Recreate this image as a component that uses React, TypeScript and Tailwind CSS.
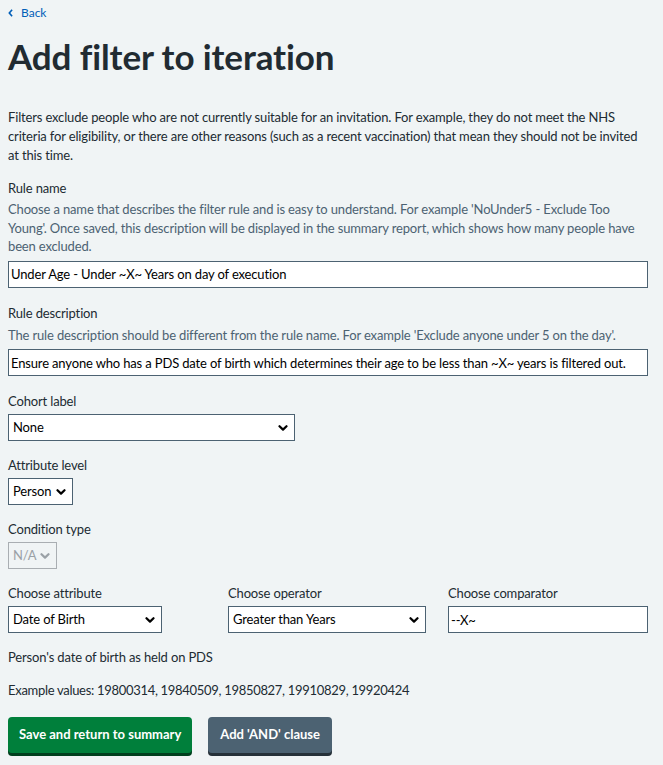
import React from "react";

const Chevron = ({ className }: { className?: string }) => (
  <svg
    viewBox="0 0 10 6"
    className={className}
    fill="none"
    stroke="currentColor"
    strokeWidth="2.2"
    strokeLinecap="round"
    strokeLinejoin="round"
  >
    <path d="M1.5 1.2 5 4.6 8.5 1.2" />
  </svg>
);

const SelectBox = ({
  value,
  widthClass,
  disabled,
}: {
  value: string;
  widthClass: string;
  disabled?: boolean;
}) => (
  <div className={`relative ${widthClass}`}>
    <select
      disabled={disabled}
      defaultValue={value}
      className={`w-full h-[27px] appearance-none pl-[4px] pr-[16px] text-[13px] tracking-[-0.15px] leading-[25px] border outline-none ${
        disabled
          ? "border-[#a9aeb2] text-[#9aa1a6] bg-transparent"
          : "border-[#4c6272] text-black bg-white"
      }`}
    >
      <option>{value}</option>
    </select>
    <Chevron
      className={`pointer-events-none absolute right-[7px] top-[11px] w-[10px] h-[6px] ${
        disabled ? "text-[#9aa1a6]" : "text-black"
      }`}
    />
  </div>
);

const Label = ({ children }: { children: React.ReactNode }) => (
  <label className="block text-[13px] tracking-[-0.15px] leading-[19px] text-[#212b32] mb-[3px]">
    {children}
  </label>
);

const Hint = ({ children, top }: { children: React.ReactNode; top: string }) => (
  <div className={`text-[13px] tracking-[-0.15px] leading-[18.5px] text-[#4c6272] mb-[5px] ${top}`}>
    {children}
  </div>
);

const TextInput = ({ value }: { value: string }) => (
  <input
    type="text"
    defaultValue={value}
    className="block w-full h-[27px] px-[2px] text-[13px] tracking-[-0.15px] text-black bg-white border border-[#4c6272] outline-none"
  />
);

export default function App() {
  return (
    <div className="min-h-[765px] bg-[#f0f4f5] font-['Lato',sans-serif] text-[#212b32]">
      <div className="w-[640px] ml-2 pt-[5px] pb-4">
        <a
          href="#"
          className="flex items-center gap-[5px] text-[12px] leading-[16px] text-[#005eb8]"
        >
          <svg viewBox="0 0 6 10" className="w-[5px] h-[8px]" fill="none" stroke="currentColor" strokeWidth="2">
            <path d="M5 1 1.5 5 5 9" />
          </svg>
          <span className="ml-[3px]">Back</span>
        </a>

        <h1 className="mt-[15px] text-[35px] leading-[40px] font-bold tracking-[-0.1px]">
          Add filter to iteration
        </h1>

        <p className="mt-[32px] text-[13px] tracking-[-0.15px] leading-[19px]">
          Filters exclude people who are not currently suitable for an invitation. For example, they do
          not meet the NHS criteria for eligibility, or there are other reasons (such as a recent
          vaccination) that mean they should not be invited at this time.
        </p>

        <div className="mt-[14px]">
          <label className="block text-[13px] tracking-[-0.15px] leading-[19px]">Rule name</label>
          <Hint top="mt-[2px]">
            Choose a name that describes the filter rule and is easy to understand. For example
            'NoUnder5 - Exclude Too Young'. Once saved, this description will be displayed in the
            summary report, which shows how many people have been excluded.
          </Hint>
          <TextInput value="Under Age - Under ~X~ Years on day of execution" />
        </div>

        <div className="mt-[16px]">
          <label className="block text-[13px] tracking-[-0.15px] leading-[19px]">Rule description</label>
          <Hint top="mt-[3px]">
            The rule description should be different from the rule name. For example 'Exclude anyone
            under 5 on the day'.
          </Hint>
          <TextInput value="Ensure anyone who has a PDS date of birth which determines their age to be less than ~X~ years is filtered out." />
        </div>

        <div className="mt-[16px]">
          <Label>Cohort label</Label>
          <SelectBox value="None" widthClass="w-[287px]" />
        </div>

        <div className="mt-[15px]">
          <Label>Attribute level</Label>
          <SelectBox value="Person" widthClass="w-[65px]" />
        </div>

        <div className="mt-[15px]">
          <Label>Condition type</Label>
          <SelectBox value="N/A" widthClass="w-[49px]" disabled />
        </div>

        <div className="mt-[15px] grid grid-cols-3 gap-5">
          <div>
            <Label>Choose attribute</Label>
            <SelectBox value="Date of Birth" widthClass="w-[154px]" />
          </div>
          <div>
            <Label>Choose operator</Label>
            <SelectBox value="Greater than Years" widthClass="w-[198px]" />
          </div>
          <div>
            <Label>Choose comparator</Label>
            <TextInput value="--X~" />
          </div>
        </div>

        <p className="mt-[15px] text-[13px] tracking-[-0.15px] leading-[19px]">
          Person's date of birth as held on PDS
        </p>
        <p className="mt-[14px] text-[13px] tracking-[-0.3px] leading-[19px]">
          Example values: 19800314, 19840509, 19850827, 19910829, 19920424
        </p>

        <div className="mt-[17px] flex gap-4">
          <button className="h-[36px] px-[11px] rounded-[4px] bg-[#007f3b] text-white text-[13px] font-bold shadow-[0_3px_0_#00401e]">
            Save and return to summary
          </button>
          <button className="h-[36px] px-[12px] rounded-[4px] bg-[#4c6272] text-white text-[13px] font-bold shadow-[0_3px_0_#263139]">
            Add 'AND' clause
          </button>
        </div>
      </div>
    </div>
  );
}
